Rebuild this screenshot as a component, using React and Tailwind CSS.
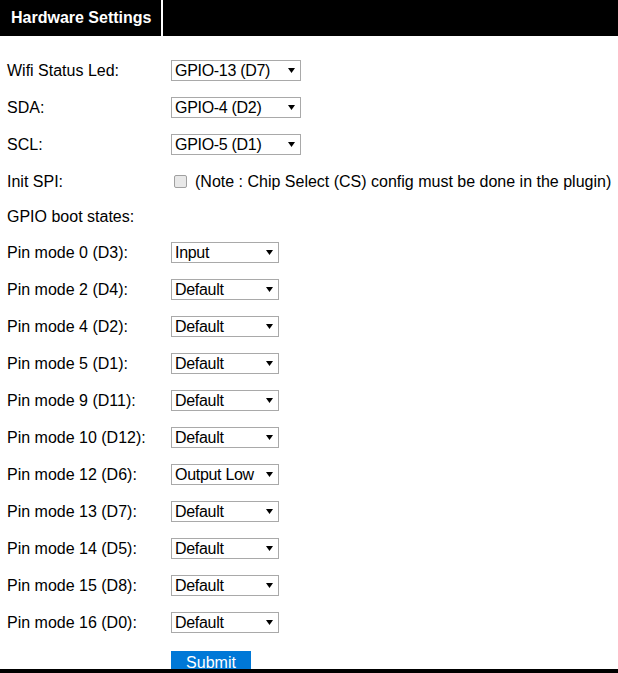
const gpioRows = [
  { label: 'Wifi Status Led:', value: 'GPIO-13 (D7)' },
  { label: 'SDA:', value: 'GPIO-4 (D2)' },
  { label: 'SCL:', value: 'GPIO-5 (D1)' },
]

const pinRows = [
  { label: 'Pin mode 0 (D3):', value: 'Input' },
  { label: 'Pin mode 2 (D4):', value: 'Default' },
  { label: 'Pin mode 4 (D2):', value: 'Default' },
  { label: 'Pin mode 5 (D1):', value: 'Default' },
  { label: 'Pin mode 9 (D11):', value: 'Default' },
  { label: 'Pin mode 10 (D12):', value: 'Default' },
  { label: 'Pin mode 12 (D6):', value: 'Output Low' },
  { label: 'Pin mode 13 (D7):', value: 'Default' },
  { label: 'Pin mode 14 (D5):', value: 'Default' },
  { label: 'Pin mode 15 (D8):', value: 'Default' },
  { label: 'Pin mode 16 (D0):', value: 'Default' },
]

function Select({ value, wide }) {
  return (
    <div
      className={`flex items-center justify-between h-[21px] border border-[#a9a9a9] bg-white pl-[3px] pr-[5px] text-[16px] leading-none text-black ${
        wide ? 'w-[130px]' : 'w-[108px]'
      }`}
    >
      <span className="tracking-[-0.3px]">{value}</span>
      <svg width="7" height="5" viewBox="0 0 7 5">
        <polygon points="0,0 7,0 3.5,5" fill="#000" />
      </svg>
    </div>
  )
}

function Row({ label, children, h = 'h-[37px]' }) {
  return (
    <div className={`flex items-center ${h}`}>
      <div className="w-[171px] pl-[7px] shrink-0">{label}</div>
      {children}
    </div>
  )
}

export default function App() {
  return (
    <div className="min-h-screen bg-white text-black text-[16px] font-['Liberation_Sans',Arial,sans-serif]">
      <div className="flex h-[36px] bg-black">
        <div className="flex items-center shrink-0 whitespace-nowrap pl-[11px] w-[163px] border-r-2 border-white text-white font-bold">
          Hardware Settings
        </div>
      </div>

      <div className="pt-[16px]">
        {gpioRows.map((r) => (
          <Row key={r.label} label={r.label}>
            <Select value={r.value} wide />
          </Row>
        ))}
        <Row label="Init SPI:">
          <div className="flex items-center">
            <div className="ml-[3px] w-[13px] h-[13px] rounded-[2px] border border-[#a0a0a0] bg-[#e8e8e8]" />
            <span className="ml-[8px]">(Note : Chip Select (CS) config must be done in the plugin)</span>
          </div>
        </Row>
        <Row label="GPIO boot states:" h="h-[33px]" />
        <div className="pt-[1px]">
          {pinRows.map((r) => (
            <Row key={r.label} label={r.label}>
              <Select value={r.value} />
            </Row>
          ))}
        </div>
        <div className="pl-[171px] pt-[10px] pb-[20px]">
          <button className="w-[80px] h-[26px] bg-[#0078d7] text-white text-[16px] leading-none pb-[2px]">
            Submit
          </button>
        </div>
      </div>

      <div className="fixed bottom-0 left-0 right-0 h-[4px] bg-black" />
    </div>
  )
}
